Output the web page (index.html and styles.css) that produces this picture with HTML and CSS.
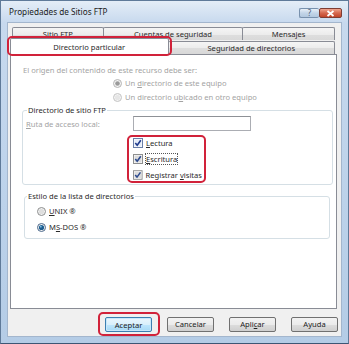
FILE: index.html
```html
<!DOCTYPE html>
<html lang="es">
<head>
	<meta charset="UTF-8">
	<title>Propiedades de Sitios FTP</title>
	<link rel="stylesheet" href="styles.css">
</head>
<body>
	<div class="window">
		<div class="titlebar">
			<span class="title">Propiedades de Sitios FTP</span>
			<div class="caption">
				<span class="capbtn help">?</span>
				<span class="capbtn close">
					<svg width="9" height="7" viewBox="0 0 9 7"><path d="M1.5 1 L7.5 6 M7.5 1 L1.5 6" stroke="#fff" stroke-width="1.8"/></svg>
				</span>
			</div>
		</div>
		<div class="client">
			<!-- pestañas -->
			<div class="tabs">
				<div class="tabrow back">
					<div class="tab t1">Sitio FTP</div>
					<div class="tab t2">Cuentas de seguridad</div>
					<div class="tab t3">Mensajes</div>
				</div>
				<div class="tabrow front">
					<div class="tab selected">Directorio particular</div>
					<div class="tab t4">Seguridad de directorios</div>
				</div>
			</div>
			<!-- contenido de la pestaña -->
			<div class="panel">
				<p class="origin off">El origen del contenido de este recurso debe ser:</p>
				<div class="sources">
					<div class="opt off">
						<svg class="radio" width="9" height="9" viewBox="0 0 9 9"><circle cx="4.5" cy="4.5" r="4" fill="#f4f4f4" stroke="#b5b5b5"/><circle cx="4.5" cy="4.5" r="2.3" fill="#9a9a9a"/></svg>
						<span>Un <u>d</u>irectorio de este equipo</span>
					</div>
					<div class="opt off">
						<svg class="radio" width="9" height="9" viewBox="0 0 9 9"><circle cx="4.5" cy="4.5" r="4" fill="#f4f4f4" stroke="#c4c4c4"/><circle cx="4.5" cy="4.5" r="2.6" fill="#e6e6e6"/></svg>
						<span>Un directorio u<u>b</u>icado en otro equipo</span>
					</div>
				</div>
				<fieldset class="group ftp">
					<legend>Directorio de sitio FTP</legend>
					<div class="pathrow">
						<span class="pathlabel off"><u>R</u>uta de acceso local:</span>
						<span class="input"></span>
					</div>
					<div class="checks">
						<div class="opt">
							<svg class="check" width="10" height="10" viewBox="0 0 10 10"><rect x="0.5" y="0.5" width="9" height="9" fill="#fff" stroke="#6a7fa8"/><rect x="1.5" y="1.5" width="7" height="7" fill="#e4ecf8"/><path d="M2.3 5 L4.2 7.2 L7.8 2.3" fill="none" stroke="#1e3a8c" stroke-width="1.6"/></svg>
							<span><u>L</u>ectura</span>
						</div>
						<div class="opt">
							<svg class="check" width="10" height="10" viewBox="0 0 10 10"><rect x="0.5" y="0.5" width="9" height="9" fill="#fff" stroke="#8e8f8f"/><rect x="1.5" y="1.5" width="7" height="7" fill="#dcdcdc"/><path d="M2.3 5 L4.2 7.2 L7.8 2.3" fill="none" stroke="#2c4a8f" stroke-width="1.6"/></svg>
							<span class="focus"><u>E</u>scritura</span>
						</div>
						<div class="opt">
							<svg class="check" width="10" height="10" viewBox="0 0 10 10"><rect x="0.5" y="0.5" width="9" height="9" fill="#fff" stroke="#8e8f8f"/><rect x="1.5" y="1.5" width="7" height="7" fill="#dcdcdc"/><path d="M2.3 5 L4.2 7.2 L7.8 2.3" fill="none" stroke="#2c4a8f" stroke-width="1.6"/></svg>
							<span>Registrar <u>v</u>isitas</span>
						</div>
					</div>
				</fieldset>
				<fieldset class="group listing">
					<legend>Estilo de la lista de directorios</legend>
					<div class="opt">
						<svg class="radio" width="9" height="9" viewBox="0 0 9 9"><circle cx="4.5" cy="4.5" r="4" fill="#f2f2f2" stroke="#8e8f8f"/><circle cx="4.5" cy="4.5" r="2.6" fill="#dedede"/></svg>
						<span><u>U</u>NIX ®</span>
					</div>
					<div class="opt">
						<svg class="radio" width="9" height="9" viewBox="0 0 9 9"><circle cx="4.5" cy="4.5" r="4" fill="#f2f2f2" stroke="#4d6a8c"/><circle cx="4.5" cy="4.5" r="2.6" fill="#1d5d8f"/><circle cx="3.8" cy="3.7" r="0.9" fill="#7fc0e8"/></svg>
						<span>M<u>S</u>-DOS ®</span>
					</div>
				</fieldset>
			</div>
			<!-- botones -->
			<div class="buttons">
				<span class="mark"><span class="button default">Aceptar</span></span>
				<span class="button">Cancelar</span>
				<span class="button">Apli<u>c</u>ar</span>
				<span class="button">Ayuda</span>
			</div>
		</div>
	</div>
</body>
</html>
```

FILE: styles.css
```css
*{
	margin: 0;
	padding: 0;
	box-sizing: border-box;
}
body{
	width: 349px;
	height: 344px;
	overflow: hidden;
	font-family: "Noto Sans", "Liberation Sans", sans-serif;
	font-size: 7.6px;
	color: #2a2a2a;
	background-color: #6c88a8;
}
u{
	text-decoration: underline;
	text-underline-offset: 1px;
}
.window{
	width: 349px;
	height: 344px;
	display: flex;
	flex-direction: column;
	padding: 0 6px 6px;
	border: 1px solid #5f7a99;
	border-bottom-color: #3d5674;
	background: linear-gradient(#e4edf7, #c7d9ee 22px, #bcd2ea 200px, #b4cce6);
}
.titlebar{
	height: 22px;
	display: flex;
	align-items: center;
	justify-content: space-between;
}
.title{
	padding-left: 2px;
	font-size: 8.2px;
	color: #1b1b1b;
}
.caption{
	display: flex;
	align-self: flex-start;
	margin-top: 7px;
}
.capbtn{
	height: 10px;
	display: flex;
	align-items: center;
	justify-content: center;
	border: 1px solid #7891ad;
	border-radius: 2px;
}
.help{
	width: 20px;
	font-size: 8px;
	line-height: 8px;
	color: #4a5f7a;
	border-right: none;
	background: linear-gradient(#e8f0f8, #c3d5e8 50%, #b2c8df);
}
.close{
	width: 23px;
	border-color: #7e3d33;
	background: linear-gradient(#f0a58f, #d5684f 50%, #c2452a);
}
.client{
	flex: 1;
	display: flex;
	flex-direction: column;
	padding: 4px 4px 0 2px;
	border: 1px solid #a3b6cd;
	background-color: #f0f0f0;
}
.tabs{
	height: 27px;
}
.tabrow{
	display: flex;
	margin-right: 2px;
}
.tabrow.back{
	height: 13px;
	margin-left: 2px;
	overflow: hidden;
}
.tabrow.front{
	height: 16px;
	margin-top: -2px;
	align-items: flex-end;
	position: relative;
}
.tab{
	border: 1px solid #898c95;
	border-bottom: none;
	border-radius: 2px 2px 0 0;
	background: linear-gradient(#f5f5f5, #ececec 50%, #dedede 51%, #d8d8d8);
	text-align: center;
	white-space: nowrap;
}
.tab + .tab{
	margin-left: -1px;
}
.back .tab{
	height: 14px;
	line-height: 13px;
}
.t1{ width: 92px; }
.t2{ width: 141px; }
.t3{ width: 93px; }
.t4{
	width: 168px;
	height: 13px;
	line-height: 12px;
}
.tab.selected{
	width: 159px;
	height: 17px;
	margin-bottom: -1px;
	line-height: 16px;
	background: #fff;
	position: relative;
	z-index: 2;
}
.tab.selected::after{
	content: "";
	position: absolute;
	top: -3px;
	left: -4px;
	right: -4px;
	bottom: -1px;
	border: 2px solid #d1223a;
	border-radius: 5px;
}
.panel{
	height: 255px;
	border: 1px solid #898c95;
	background-color: #fff;
}
.off{
	color: #a3a3a3;
}
.origin{
	margin-top: 9px;
	padding-left: 12px;
	line-height: 12px;
}
.sources{
	padding-left: 102px;
}
.opt{
	display: flex;
	align-items: center;
	gap: 3px;
	height: 14px;
	white-space: nowrap;
}
.radio{
	flex: none;
}
.group{
	border: 1px solid #d5dfe5;
	border-radius: 3px;
}
.group legend{
	line-height: 12px;
	padding: 0 1px;
}
.ftp{
	margin: 0 3px 0 11px;
	padding: 0 3px 1px;
}
.ftp legend{
	margin-left: 1px;
}
.pathrow{
	display: flex;
	align-items: center;
	height: 15px;
}
.pathlabel{
	width: 107px;
}
.input{
	width: 118px;
	height: 15px;
	border: 1px solid #abadb3;
	border-top-color: #8e9196;
	background-color: #fff;
}
.checks{
	width: 79px;
	margin: 4px 0 0 101px;
	padding: 0 2px 0 4px;
	border: 2px solid #d1223a;
	border-radius: 5px;
	display: flex;
	flex-direction: column;
	gap: 4px;
}
.checks .opt{
	height: 12px;
}
.focus{
	outline: 1px dotted #555;
	outline-offset: 0;
}
.listing{
	margin: 5px 6px 0 13px;
	padding: 2px 0 4px 12px;
	display: flex;
	flex-direction: column;
	gap: 2px;
}
.listing legend{
	margin-left: -10px;
}
.buttons{
	display: flex;
	justify-content: flex-end;
	align-items: center;
	margin: 3px -1px 0 0;
	gap: 15px;
}
.mark{
	padding: 3px 6px 2px 5px;
	border: 2px solid #d1223a;
	border-radius: 5px;
	margin-right: -8px;
}
.button{
	width: 47px;
	height: 15px;
	display: flex;
	align-items: center;
	justify-content: center;
	border: 1px solid #707070;
	border-radius: 2px;
	background: linear-gradient(#f2f2f2, #ebebeb 50%, #dddddd 51%, #cfcfcf);
	color: #222;
}
.button.default{
	border-color: #3c7fb1;
	background: linear-gradient(#eaf6fd, #d9f0fc 50%, #bee6fd 51%, #a7d9f5);
	box-shadow: inset 0 0 0 1px #c8e8fb;
}
```
